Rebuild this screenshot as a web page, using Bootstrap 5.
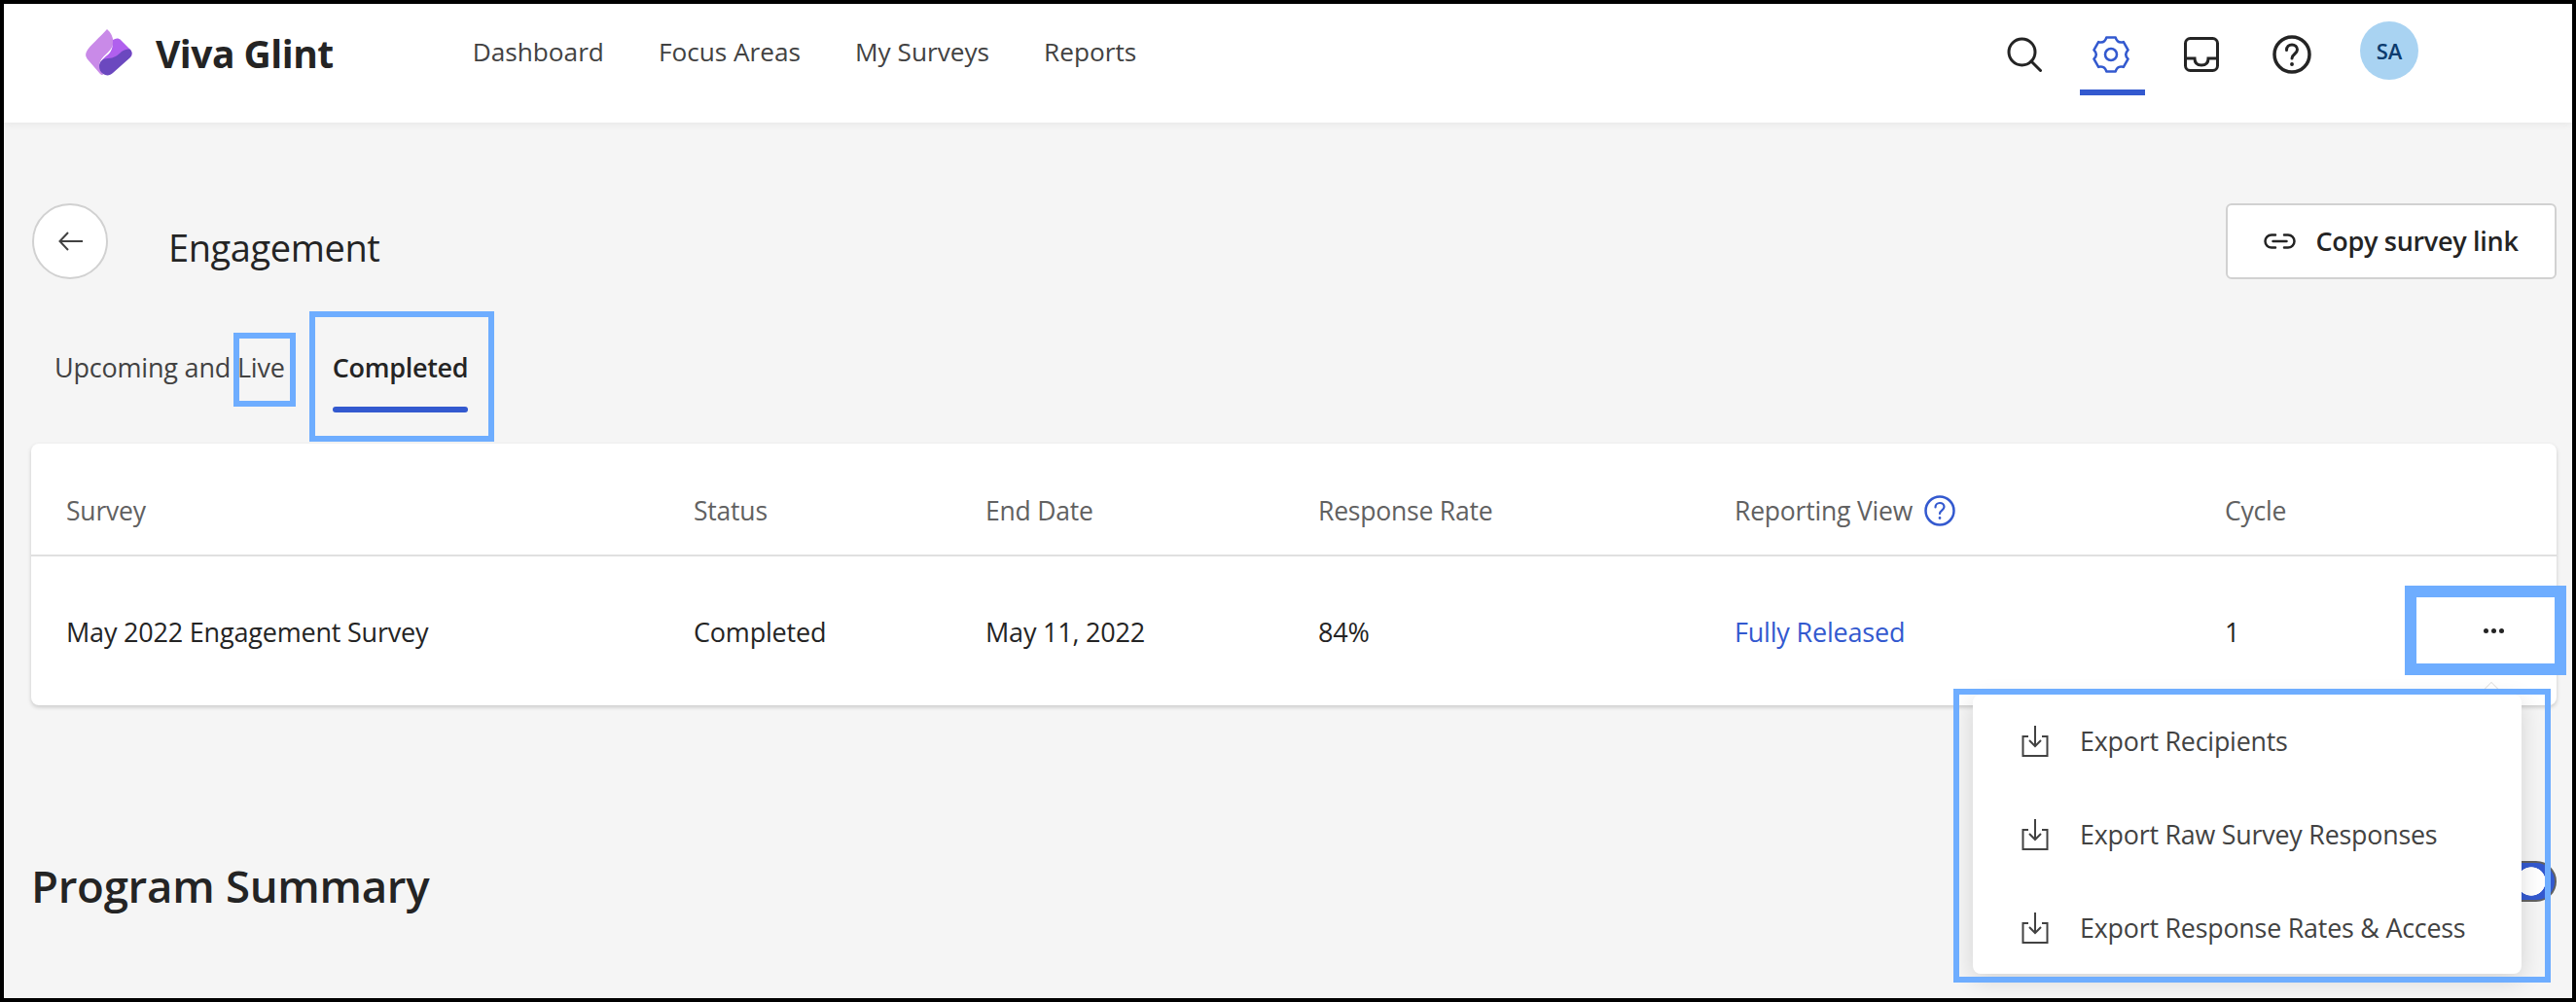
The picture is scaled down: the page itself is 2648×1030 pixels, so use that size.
<!DOCTYPE html>
<html lang="en">
  <head>
    <meta charset="UTF-8" />
    <title>Viva Glint - Engagement</title>
    <link
      href="https://cdn.jsdelivr.net/npm/bootstrap@5.3.0/dist/css/bootstrap.min.css"
      rel="stylesheet"
    />
    <style>
      html, body { height: 100%; }
      body { background: #000; font-family: "Open Sans", "Noto Sans", sans-serif; color: #242424; }
      .page-frame { position: relative; height: 1030px; border: 4px solid #000; background: #f5f5f5; overflow: hidden; }

      .top-bar { height: 122px; padding: 0 158px 22px 84px; background: #fff; box-shadow: 0 2px 8px rgba(0,0,0,.06); flex-wrap: nowrap; }
      .brand-name { margin-left: 24px; font-size: 39px; font-weight: 700; color: #242424; letter-spacing: -.5px; line-height: 1; }
      .top-links { margin-left: 143px; gap: 56px; }
      .top-links .nav-link { padding: 0; font-size: 26.200px; color: #424242; }
      .icon-slot { position: relative; width: 67px; height: 100px; padding-top: 4px; }
      .icon-slot.is-active::after { content: ""; position: absolute; left: 0; right: 0; bottom: 6px; height: 6px; background: #3359cf; }
      .gear-icon { margin-right: 3px; }
      .slot-help { margin-left: 2px; }
      .user-avatar { width: 60px; height: 60px; margin: 0 0 4px 13px; background: #a9d3f2; color: #0c3b6e; font-size: 22px; font-weight: 600; }

      .page-body { padding: 83px 16px 0 28px; }
      .back-btn { width: 78px; height: 78px; margin-left: 1px; padding: 0; background: #fff; border: 2px solid #d1d1d1; }
      .page-title { margin: 23px 0 0 62px; font-size: 38px; font-weight: 400; line-height: 1.2; letter-spacing: -.4px; }
      .copy-btn { width: 340px; height: 78px; background: #fff; border: 2px solid #d1d1d1; border-radius: 6px; font-size: 27px; font-weight: 600; color: #242424; gap: 20px; letter-spacing: -.3px; }

      .tab-row { margin: 73px 0 32px 24px; gap: 49px; }
      .tab-item { padding: 0; font-size: 27px; line-height: 36px; color: #424242; letter-spacing: -.2px; }
      .tab-item::after { content: ""; display: block; height: 6px; margin-top: 22px; border-radius: 3px; }
      .tab-item.is-active { font-weight: 600; color: #242424; letter-spacing: -.3px; }
      .tab-item.is-active::after { background: #3359cf; }

      .survey-card { border: 0; border-radius: 8px; box-shadow: 0 2px 4px rgba(0,0,0,.18); }
      .survey-table { table-layout: fixed; margin: 0; font-size: 27px; line-height: 36px; letter-spacing: -.2px; }
      .survey-table th { padding: 51px 0 27px; font-size: 26.500px; font-weight: 400; color: #616161; border-bottom: 2px solid #e0e0e0; }
      .survey-table td { padding: 60px 0 57px; color: #242424; border-bottom: 0; }
      .survey-table th:first-child, .survey-table td:first-child { padding-left: 36px; }
      .w-survey { width: 681px; }
      .w-status { width: 300px; }
      .w-date { width: 342px; }
      .w-rate { width: 428px; }
      .w-view { width: 504px; }
      .view-gap { gap: 12px; }
      .view-link { color: #3359cf; text-decoration: none; }
      .more-dots { gap: 3px; width: 21px; margin: 14px 0 0 251px; }
      .more-dots span { width: 5px; height: 5px; background: #242424; }

      .summary-row { margin-top: 155px; height: 60px; }
      .summary-title { margin: 0; font-size: 45.600px; font-weight: 600; line-height: 60px; letter-spacing: -.3px; }
      .form-switch .summary-switch { width: 84px; height: 42px; margin: 0 0 8px; background-color: #3359cf; border: 2px solid #616161; background-image: radial-gradient(circle 15px at calc(100% - 24px) 50%, #fff 96%, transparent 100%); background-position: 0 0; background-size: auto; }

      .export-menu { top: 710px; left: 2024px; width: 564px; height: 287px; padding: 0; border: 0; border-radius: 8px; box-shadow: 0 6px 24px rgba(0,0,0,.14); z-index: 3; }
      .export-menu .dropdown-item { height: 96px; padding: 0 0 0 50px; gap: 32px; font-size: 26.800px; color: #424242; letter-spacing: -.2px; }
      .menu-tip { position: absolute; left: 2549px; top: 700px; width: 16px; height: 16px; background: #fff; border: 1px solid #e0e0e0; transform: rotate(45deg); z-index: 2; }

      .callout { position: absolute; border: 6px solid #6eadff; z-index: 4; pointer-events: none; }
      .callout-live { left: 236px; top: 338px; width: 64px; height: 76px; }
      .callout-done { left: 314px; top: 316px; width: 190px; height: 134px; }
      .callout-more { left: 2468px; top: 598px; width: 166px; height: 92px; border-width: 12px; }
      .callout-menu { left: 2004px; top: 704px; width: 614px; height: 302px; }
    </style>
  </head>
  <body>
    <div class="page-frame">
      <nav class="navbar top-bar">
        <div class="d-flex align-items-center">
          <svg width="48" height="48" viewBox="0 0 48 48" aria-hidden="true">
            <path fill="#c98ae8" d="M22 0C16 7 4 17 1 23c-1.500 3-1 5 1 8l13 15c1 1 2 1 3 1L14 36c2-9 12-12 14-20C29 10 27 4 22 0Z" />
            <path fill="#b060ee" d="M28 11c3-2 6-2 8 0l10 10c2 2 2 5 1 7L30 34l-16 4c2-8 8-10 11-14 3-4 3-9 3-13Z" />
            <path fill="#6b48bf" d="M14 38c0-5 4-8 9-8 6 0 10-3 14-7 3-2 7-3 9-2 2 2 2 5 0 8L28 45c-3 3-7 3-10 1-3-2-4-5-4-8Z" />
          </svg>
          <span class="brand-name">Viva Glint</span>
          <div class="navbar-nav flex-row top-links">
            <a class="nav-link" href="#">Dashboard</a>
            <a class="nav-link" href="#">Focus Areas</a>
            <a class="nav-link" href="#">My Surveys</a>
            <a class="nav-link" href="#">Reports</a>
          </div>
        </div>
        <div class="d-flex align-items-center gap-4">
          <div class="icon-slot d-flex align-items-center justify-content-center">
            <svg width="36" height="36" viewBox="0 0 36 36" fill="none" stroke="#242424" stroke-width="3" stroke-linecap="round" aria-hidden="true">
              <circle cx="15.500" cy="15.500" r="13.500" />
              <path d="M25 25l9.500 9.500" />
            </svg>
          </div>
          <div class="icon-slot is-active d-flex align-items-center justify-content-center">
            <svg class="gear-icon" width="38" height="38" viewBox="0.900 0.900 22.200 22.200" fill="none" stroke="#3359cf" stroke-width="1.500" stroke-linejoin="round" aria-hidden="true">
              <path d="M9.260 1.760L14.740 1.760Q15.750 5.500 19.500 4.500L22.240 9.260Q19.500 12 22.240 14.740L19.500 19.500Q15.750 18.500 14.740 22.240L9.260 22.240Q8.250 18.500 4.500 19.500L1.760 14.740Q4.500 12 1.760 9.260L4.500 4.500Q8.250 5.500 9.260 1.760Z" />
              <circle cx="12" cy="12" r="3.500" />
            </svg>
          </div>
          <div class="icon-slot d-flex align-items-center justify-content-center">
            <svg width="36" height="36" viewBox="0 0 36 36" fill="none" stroke="#242424" stroke-width="3" aria-hidden="true">
              <rect x="1.500" y="1.500" width="33" height="33" rx="5" />
              <path d="M1.500 22H11C11 27 14 29 18 29C22 29 25 27 25 22H34.500" />
            </svg>
          </div>
          <div class="icon-slot slot-help d-flex align-items-center justify-content-center">
            <svg width="40" height="40" viewBox="0 0 40 40" fill="none" stroke="#242424" stroke-width="3.500" stroke-linecap="round" aria-hidden="true">
              <circle cx="20" cy="20" r="18" />
              <path stroke-width="3" d="M14.500 15.500c0-3.500 2.500-5.500 5.500-5.500s5.500 2 5.500 5c0 4.500-5.500 4.500-5.500 9" />
              <circle cx="20" cy="30" r="1.200" fill="#242424" stroke-width="1.500" />
            </svg>
          </div>
          <div class="user-avatar rounded-circle d-flex align-items-center justify-content-center">SA</div>
        </div>
      </nav>

      <main class="page-body">
        <div class="d-flex align-items-start">
          <button class="btn back-btn rounded-circle d-flex align-items-center justify-content-center" type="button" aria-label="Back">
            <svg width="25" height="20" viewBox="0 0 25 20" fill="none" stroke="#424242" stroke-width="2" aria-hidden="true">
              <path d="M25 10H1.500M10 1L1.500 10L10 19" />
            </svg>
          </button>
          <h1 class="page-title">Engagement</h1>
          <button class="btn copy-btn ms-auto d-flex align-items-center justify-content-center" type="button">
            <svg width="33" height="16" viewBox="0 0 33 16" fill="none" stroke="#242424" stroke-width="2.500" stroke-linecap="round" aria-hidden="true">
              <path d="M12 1.500H8a6.500 6.500 0 0 0 0 13H12M21 1.500H25a6.500 6.500 0 0 1 0 13H21M9.500 8H23.500" />
            </svg>
            Copy survey link
          </button>
        </div>

        <div class="d-flex tab-row">
          <a class="nav-link tab-item" href="#">Upcoming and Live</a>
          <a class="nav-link tab-item is-active" href="#">Completed</a>
        </div>

        <div class="card survey-card">
          <table class="table survey-table">
            <thead>
              <tr>
                <th class="w-survey">Survey</th>
                <th class="w-status">Status</th>
                <th class="w-date">End Date</th>
                <th class="w-rate">Response Rate</th>
                <th class="w-view">
                  <span class="d-inline-flex align-items-center view-gap">
                    Reporting View
                    <svg width="32" height="32" viewBox="0 0 32 32" fill="none" stroke="#3359cf" stroke-width="2.500" stroke-linecap="round" aria-hidden="true">
                      <circle cx="16" cy="16" r="14.500" />
                      <path stroke-width="2.200" d="M11.500 12.500c0-2.800 2-4.500 4.500-4.500s4.500 1.700 4.500 4c0 3.500-4.500 3.700-4.500 7" />
                      <circle cx="16" cy="23.500" r=".8" fill="#3359cf" stroke-width="1.200" />
                    </svg>
                  </span>
                </th>
                <th>Cycle</th>
              </tr>
            </thead>
            <tbody>
              <tr>
                <td>May 2022 Engagement Survey</td>
                <td>Completed</td>
                <td>May 11, 2022</td>
                <td>84%</td>
                <td><a class="view-link" href="#">Fully Released</a></td>
                <td>
                  <div class="d-flex">
                    <span>1</span>
                    <div class="d-flex more-dots">
                      <span class="rounded-circle"></span>
                      <span class="rounded-circle"></span>
                      <span class="rounded-circle"></span>
                    </div>
                  </div>
                </td>
              </tr>
            </tbody>
          </table>
        </div>

        <div class="d-flex justify-content-between align-items-center summary-row">
          <h2 class="summary-title">Program Summary</h2>
          <div class="form-check form-switch m-0 p-0">
            <input class="form-check-input summary-switch" type="checkbox" role="switch" checked aria-label="Program summary" />
          </div>
        </div>
      </main>

      <span class="menu-tip"></span>
      <div class="dropdown-menu show export-menu">
        <a class="dropdown-item d-flex align-items-center" href="#">
          <svg width="28" height="32" viewBox="0 0 28 32" fill="none" stroke="#424242" stroke-width="2" aria-hidden="true"><path d="M14 0V21M8 15L14 21L20 15M7 11H1.500V31H26.500V11H21" /></svg>
          Export Recipients
        </a>
        <a class="dropdown-item d-flex align-items-center" href="#">
          <svg width="28" height="32" viewBox="0 0 28 32" fill="none" stroke="#424242" stroke-width="2" aria-hidden="true"><path d="M14 0V21M8 15L14 21L20 15M7 11H1.500V31H26.500V11H21" /></svg>
          Export Raw Survey Responses
        </a>
        <a class="dropdown-item d-flex align-items-center" href="#">
          <svg width="28" height="32" viewBox="0 0 28 32" fill="none" stroke="#424242" stroke-width="2" aria-hidden="true"><path d="M14 0V21M8 15L14 21L20 15M7 11H1.500V31H26.500V11H21" /></svg>
          Export Response Rates &amp; Access
        </a>
      </div>

      <div class="callout callout-live"></div>
      <div class="callout callout-done"></div>
      <div class="callout callout-more"></div>
      <div class="callout callout-menu"></div>
    </div>

    <script src="https://cdn.jsdelivr.net/npm/bootstrap@5.3.0/dist/js/bootstrap.bundle.min.js"></script>
  </body>
</html>
